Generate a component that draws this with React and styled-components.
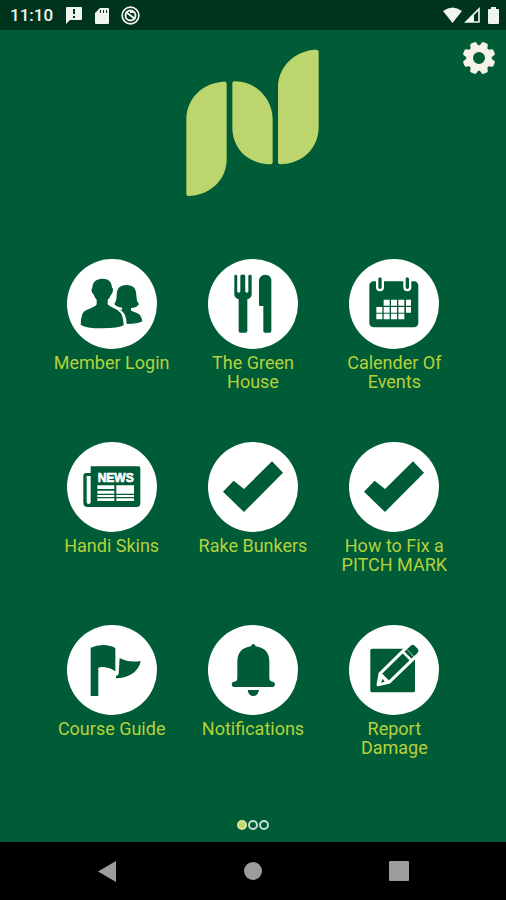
import React from "react";
import styled, { createGlobalStyle } from "styled-components";

const green = "#005b37";
const lime = "#bcd56c";

const GlobalStyle = createGlobalStyle`
  *, *::before, *::after { box-sizing: border-box; }
  body {
    margin: 0;
    background: ${green};
    font-family: Roboto, "Liberation Sans", sans-serif;
  }
`;

const Screen = styled.div`
  display: flex;
  flex-direction: column;
  min-height: 100vh;
  background: ${green};
`;

const StatusBar = styled.header`
  display: flex;
  align-items: center;
  justify-content: space-between;
  height: 30px;
  padding: 0 6px 0 10px;
  background: #00331c;
  color: #f1f5f2;
`;

const StatusGroup = styled.div`
  display: flex;
  align-items: center;
  gap: ${(p) => p.$gap};
`;

const Clock = styled.time`
  font-size: 17px;
  line-height: 20px;
  font-weight: 500;
`;

const Glyph = styled.svg`
  display: block;
  flex: none;
  width: ${(p) => p.$w}px;
  height: ${(p) => p.$h}px;
`;

const TopArea = styled.div`
  display: grid;
  grid-template-columns: 1fr auto 1fr;
  align-items: start;
  padding: 10px 10px 0;
`;

const Logo = styled.svg`
  grid-column: 2;
  display: block;
  width: 134px;
  height: 148px;
  margin-top: 9px;
`;

const SettingsButton = styled.button`
  justify-self: end;
  padding: 0;
  border: 0;
  background: none;
  color: #f6f2e6;
  cursor: pointer;
`;

const Menu = styled.main`
  flex: 1;
  display: grid;
  grid-template-columns: repeat(3, 1fr);
  grid-auto-rows: 140px;
  row-gap: 43px;
  align-content: start;
  padding: 62px 41px 0;
`;

const Tile = styled.button`
  display: flex;
  flex-direction: column;
  align-items: center;
  gap: 4px;
  padding: 0;
  border: 0;
  background: none;
  color: #b5d13c;
  font: inherit;
  cursor: pointer;
`;

const Disc = styled.span`
  display: block;
  width: 90px;
  height: 90px;
  border-radius: 50%;
  background: #fff;
  color: ${green};
`;

const Label = styled.span`
  max-width: 120px;
  font-size: 18px;
  line-height: 19px;
  text-align: center;
`;

const Pager = styled.nav`
  display: flex;
  justify-content: center;
  gap: 1px;
  padding: 0 0 12px;
`;

const Dot = styled.button`
  width: 10px;
  height: 10px;
  padding: 0;
  border: 2px solid ${(p) => (p.$active ? "#d5e59b" : "#c5dfd0")};
  border-radius: 50%;
  background: ${(p) => (p.$active ? lime : "transparent")};
`;

const NavBar = styled.footer`
  display: grid;
  grid-template-columns: repeat(3, 146px);
  justify-content: center;
  height: 58px;
  background: #000;
`;

const NavButton = styled.button`
  display: grid;
  place-items: center;
  padding: 0;
  border: 0;
  background: none;
  color: #9c9c9c;
  cursor: pointer;
`;

const gearTeeth = [0, 45, 90, 135, 180, 225, 270, 315];

const GearIcon = () => (
  <Glyph $w={34} $h={36} viewBox="-51 -54 102 108" fill="currentColor">
    <path
      fillRule="evenodd"
      d="M0-38a38 38 0 1 0 0 76a38 38 0 1 0 0-76ZM0-18a18 18 0 1 1 0 36a18 18 0 1 1 0-36Z"
    />
    {gearTeeth.map((a) => (
      <path key={a} transform={`rotate(${a + 22.5})`} d="M-13-32L-10-45Q-9-49-5-49H5Q9-49 10-45L13-32Z" />
    ))}
  </Glyph>
);

const tiles = [
  {
    label: "Member Login",
    box: "52 27 270 270",
    art: (
      <>
        <path d="M158 86C139 86 128 97 128 114Q124 117 126 124Q128 132 132 134Q136 144 141 149V163Q137 170 120 176Q102 182 98 192Q93 208 93 224Q106 235 158 235Q207 235 222 226Q221 203 214 190Q207 180 193 175Q178 169 174 163V149Q181 143 184 134Q190 128 190 119Q191 114 187 113C186 95 177 86 158 86Z" />
        <path d="M230 105C211 105 201 116 201 135Q201 153 194 162Q201 172 217 173V181L208 177Q222 185 226 196Q231 208 231 222Q264 222 278 214Q276 197 266 191Q248 185 244 181V174Q261 174 268 163Q260 153 260 137C260 115 251 105 230 105Z" />
      </>
    ),
  },
  {
    label: "The Green House",
    box: "54 27 270 270",
    art: (
      <>
        <path d="M133 78Q133 74 137 74T142 78V124Q142 128 146 128T150 124V78Q150 74 158 74T167 78V124Q167 128 171 128T175 124V78Q175 74 180 74T185 78V134Q185 142 172 148V243Q172 248 167 248H151Q146 248 146 243V148Q133 142 133 134Z" />
        <path d="M154 74H163V124Q163 128 158 128T154 124Z" />
        <path fill="#fff" d="M143 72h8v51q0 4-4 4t-4-4ZM166 72h8v51q0 4-4 4t-4-4Z" />
        <path d="M207 94Q208 74 226 74Q244 74 244 94V243Q244 248 239 248H225Q220 248 220 243V168H211Q207 168 207 164Z" />
      </>
    ),
  },
  {
    label: "Calender Of Events",
    box: "44 27 270 270",
    art: (
      <>
        <rect x="105" y="94" width="147" height="138" rx="13" />
        <path d="M137 87V112M219 87V112" stroke="#fff" strokeWidth="24" strokeLinecap="round" />
        <path d="M137 87V112M219 87V112" stroke="currentColor" strokeWidth="10" strokeLinecap="round" />
        <path
          fill="#fff"
          d="M148 149h18v18h-18zM170 149h18v18h-18zM192 149h18v18h-18zM215 149h15v18h-15zM126 171h18v17h-18zM148 171h18v17h-18zM170 171h18v17h-18zM192 171h18v17h-18zM215 171h15v17h-15zM126 191h18v17h-18zM148 191h18v17h-18zM170 191h18v17h-18zM192 191h18v17h-18z"
        />
      </>
    ),
  },
  {
    label: "Handi Skins",
    box: "52 22 270 270",
    art: (
      <>
        <path d="M123 95H267Q272 95 272 100V206Q272 217 261 217H114Q101 217 101 204V123Q101 115 110 115H123Z" />
        <path fill="#fff" d="M111 124H123V202Q123 208 117 208T111 202Z" />
        <text x="198" y="141" fill="#fff" stroke="#fff" strokeWidth="2" textAnchor="middle" fontFamily="Liberation Sans, sans-serif" fontSize="36" fontWeight="700">
          NEWS
        </text>
        <path fill="#fff" d="M143 152h51v11h-51zM200 152h53v25h-53zM143 168h51v9h-51zM143 181h51v6h-51zM200 181h53v6h-53zM143 191h51v8h-51zM200 191h53v8h-53z" />
      </>
    ),
  },
  {
    label: "Rake Bunkers",
    box: "44 22 270 270",
    art: <path d="M89 171L121 138L152 163L236 80L269 114L152 232Z" />,
  },
  {
    label: "How to Fix a PITCH MARK",
    box: "44 22 270 270",
    art: <path d="M89 171L121 138L152 163L236 80L269 114L152 232Z" />,
  },
  {
    label: "Course Guide",
    box: "52 18 270 270",
    art: (
      <>
        <path d="M123 86Q139 78 161 78Q183 79 197 87V157Q185 148 167 145Q154 143 146 146V231H123Z" />
        <path d="M210 117Q237 132 273 126Q269 151 245 166Q225 178 199 178V170Q207 170 207 163Z" />
      </>
    ),
  },
  {
    label: "Notifications",
    box: "54 18 270 270",
    art: (
      <>
        <path d="M190 75Q195 75 197 82Q238 88 238 128V177Q238 188 249 188Q255 190 255 196T249 204H131Q125 202 125 196T131 188Q142 188 142 177V128Q142 88 183 82Q185 75 190 75Z" />
        <path d="M173 213H207Q204 231 190 231T173 213Z" />
      </>
    ),
  },
  {
    label: "Report Damage",
    box: "44 18 270 270",
    art: (
      <>
        <rect x="108" y="89" width="134" height="131" rx="5" />
        <path d="M131 197L137 164L217 85L244 113L164 190Z" stroke="#fff" strokeWidth="9" strokeLinejoin="round" />
        <path d="M205 98L232 125M137 163L164 190" stroke="#fff" strokeWidth="8" />
        <path fill="#fff" d="M133 197L140 165L148 168L149 179L161 182L163 190Z" />
        <path d="M145 179L151 188L140 191Z" />
        <path d="M218 91L229 80Q235 75 241 80L250 89Q255 95 250 101L239 112Z" />
      </>
    ),
  },
];

export default function App() {
  return (
    <Screen>
      <GlobalStyle />
      <StatusBar>
        <StatusGroup $gap="12px">
          <Clock>11:10</Clock>
          <StatusGroup $gap="12px">
            <Glyph $w={18} $h={18} viewBox="0 0 18 18" fill="currentColor">
              <path fillRule="evenodd" d="M2 1H16Q17 1 17 2V13Q17 14 16 14H5L1 18V2Q1 1 2 1ZM8 3V8H10V3ZM8 10V12H10V10Z" />
            </Glyph>
            <Glyph $w={14} $h={17} viewBox="0 0 14 17" fill="currentColor">
              <path fillRule="evenodd" d="M5 1H13Q14 1 14 2V16Q14 17 13 17H1Q0 17 0 16V6ZM5 3V6H6V3ZM8 3V6H9V3ZM11 3V6H12V3Z" />
            </Glyph>
            <Glyph $w={19} $h={19} viewBox="0 0 19 19" fill="none" stroke="currentColor" strokeWidth="2">
              <circle cx="9.5" cy="9.5" r="8.4" strokeWidth="1.6" />
              <circle cx="9.5" cy="9.5" r="5" />
              <path d="M5 6L14 13M9 6H13" />
            </Glyph>
          </StatusGroup>
        </StatusGroup>
        <StatusGroup $gap="2px">
          <Glyph $w={19} $h={16} viewBox="0 0 19 16" fill="currentColor">
            <path d="M0 4Q9.500-3 19 4L9.500 16Z" />
          </Glyph>
          <Glyph $w={17} $h={16} viewBox="0 0 17 16">
            <path d="M2 15H15V2Z" fill="none" stroke="currentColor" strokeWidth="1.600" />
            <path d="M2 15L10 7V15Z" fill="currentColor" />
          </Glyph>
          <Glyph $w={17} $h={17} viewBox="0 0 17 17" fill="currentColor">
            <path d="M8 0H13V2H15Q16 2 16 3V16Q16 17 15 17H6Q5 17 5 16V3Q5 2 6 2H8Z" />
          </Glyph>
        </StatusGroup>
      </StatusBar>

      <TopArea>
        <Logo viewBox="49 28 402 444" fill={lime} role="img" aria-label="Club logo">
          <path d="M160 126Q171 124 171 132V363C168 425 118 467 56 469Q50 469 50 462V240C50 177 98 130 160 126Z" />
          <path d="M196 125C264 126 309 180 309 240V366Q309 375 299 374C229 371 188 322 188 263V132Q188 125 196 125Z" />
          <path d="M438 30Q447 29 447 38V263C447 325 398 374 332 374Q325 374 325 367V143C325 83 373 33 438 30Z" />
        </Logo>
        <SettingsButton type="button" aria-label="Settings">
          <GearIcon />
        </SettingsButton>
      </TopArea>

      <Menu>
        {tiles.map((t) => (
          <Tile key={t.label} type="button">
            <Disc>
              <Glyph $w={90} $h={90} viewBox={t.box} fill="currentColor" aria-hidden="true">
                {t.art}
              </Glyph>
            </Disc>
            <Label>{t.label}</Label>
          </Tile>
        ))}
      </Menu>

      <Pager aria-label="Pages">
        <Dot type="button" aria-label="Page 1" $active />
        <Dot type="button" aria-label="Page 2" />
        <Dot type="button" aria-label="Page 3" />
      </Pager>

      <NavBar>
        <NavButton type="button" aria-label="Back">
          <Glyph $w={18} $h={21} viewBox="0 0 18 21" fill="currentColor">
            <path d="M18 0V21L0 10.500Z" />
          </Glyph>
        </NavButton>
        <NavButton type="button" aria-label="Home">
          <Glyph $w={18} $h={18} viewBox="0 0 18 18" fill="currentColor">
            <circle cx="9" cy="9" r="9" />
          </Glyph>
        </NavButton>
        <NavButton type="button" aria-label="Recent apps">
          <Glyph $w={20} $h={20} viewBox="0 0 20 20" fill="currentColor">
            <rect width="20" height="20" rx="1" />
          </Glyph>
        </NavButton>
      </NavBar>
    </Screen>
  );
}
